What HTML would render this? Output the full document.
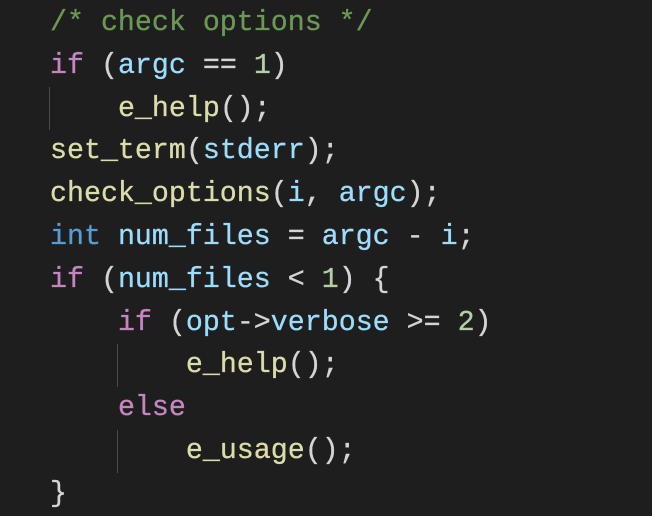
<!DOCTYPE html>
<html><head><style>
html,body{margin:0;padding:0;background:#1e1e1e;width:652px;height:512px;overflow:hidden}
pre{margin:0;position:absolute;left:50px;top:2px;font-family:"Liberation Mono",monospace;font-size:28.3px;line-height:42.8px;color:#d4d4d4;-webkit-text-stroke:0.3px}
.c{color:#6a9955}.k{color:#c586c0}.v{color:#9cdcfe}.n{color:#b5cea8}.f{color:#dcdcaa}.t{color:#569cd6}
.g{position:absolute;width:1px;background:#4a4a4a}
</style></head><body>
<div class="g" style="left:49px;top:87px;height:43px"></div>
<div class="g" style="left:117px;top:344px;height:43px"></div>
<div class="g" style="left:117px;top:430px;height:43px"></div>
<pre><span class="c">/* check options */</span>
<span class="k">if</span> (<span class="v">argc</span> == <span class="n">1</span>)
    <span class="f">e_help</span>();
<span class="f">set_term</span>(<span class="v">stderr</span>);
<span class="f">check_options</span>(<span class="v">i</span>, <span class="v">argc</span>);
<span class="t">int</span> <span class="v">num_files</span> = <span class="v">argc</span> - <span class="v">i</span>;
<span class="k">if</span> (<span class="v">num_files</span> &lt; <span class="n">1</span>) {
    <span class="k">if</span> (<span class="v">opt</span>-&gt;<span class="v">verbose</span> &gt;= <span class="n">2</span>)
        <span class="f">e_help</span>();
    <span class="k">else</span>
        <span class="f">e_usage</span>();
}</pre>
</body></html>
